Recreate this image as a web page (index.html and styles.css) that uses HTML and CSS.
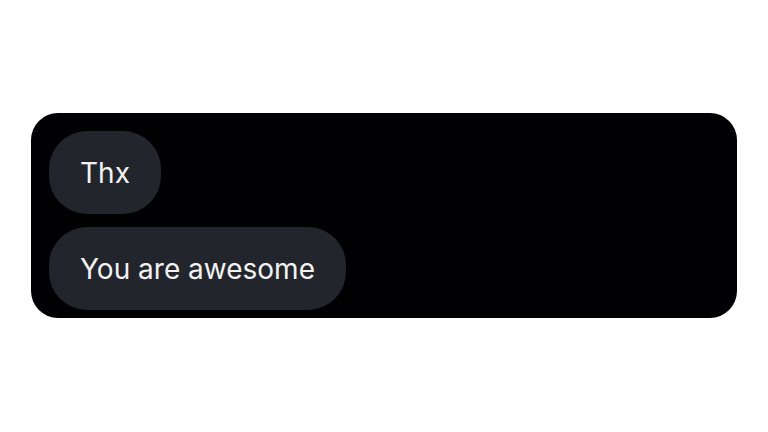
FILE: index.html
```html
<!DOCTYPE html>
<html>
<head>
<meta charset="utf-8">
<link rel="stylesheet" href="styles.css">
</head>
<body>
<div class="page">
  <div class="panel">
    <div class="bubble">Thx</div>
    <div class="bubble">You are awesome</div>
  </div>
</div>
</body>
</html>
```
FILE: styles.css
```css
html, body {
  margin: 0;
  padding: 0;
  background: #ffffff;
}
.page {
  width: 768px;
  height: 432px;
  padding: 113px 31px 0 31px;
  box-sizing: border-box;
}
.panel {
  width: 706px;
  height: 205px;
  box-sizing: border-box;
  background: #010103;
  border-radius: 27px;
  padding: 18px 18px 0 18px;
  display: flex;
  flex-direction: column;
  align-items: flex-start;
  gap: 13px;
}
.bubble {
  height: 83px;
  box-sizing: border-box;
  padding: 0 31px;
  display: flex;
  align-items: center;
  background: #22262c;
  border-radius: 38px;
  color: #f2f2f2;
  font-family: Inter, Roboto, sans-serif;
  font-size: 28px;
  line-height: 1;
}
```
